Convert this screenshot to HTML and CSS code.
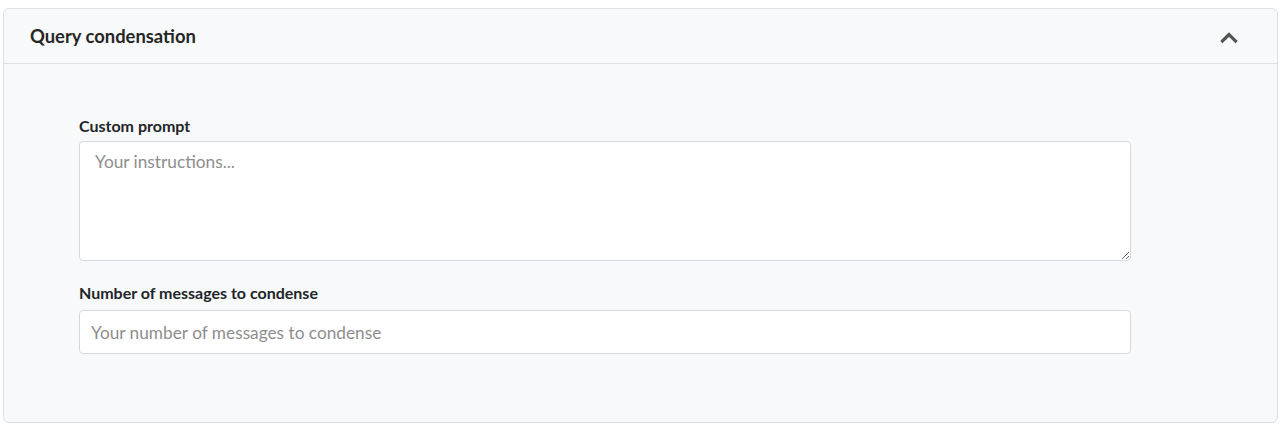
FILE: index.html
```html
<!DOCTYPE html>
<html>
<head>
<meta charset="utf-8">
<link rel="stylesheet" href="styles.css">
</head>
<body>
<div class="card">
  <div class="card-header">
    <span class="title">Query condensation</span>
    <svg class="chev" width="20" height="14" viewBox="0 0 20 14"><path d="M3.5 11 L10 4.5 L16.5 11" fill="none" stroke="#555555" stroke-width="3.2" stroke-linecap="square" stroke-linejoin="miter"/></svg>
  </div>
  <div class="card-body">
    <div class="form">
      <label class="label">Custom prompt</label>
      <textarea class="textarea" placeholder="Your instructions..."></textarea>
      <label class="label second">Number of messages to condense</label>
      <input class="input" type="text" placeholder="Your number of messages to condense">
    </div>
  </div>
</div>
</body>
</html>
```

FILE: styles.css
```css
* { box-sizing: border-box; }
html, body { background: #ffffff; }
body {
  margin: 0;
  padding: 8px 9px 6px 3px;
  font-family: Lato, "Liberation Sans", sans-serif;
  color: #212529;
}
.card {
  border: 1px solid #dcdfe3;
  border-radius: 6px;
  background: #f8f9fa;
  overflow: hidden;
}
.card-header {
  height: 55px;
  display: flex;
  align-items: center;
  justify-content: space-between;
  padding: 0 38px 0 26px;
  border-bottom: 1px solid #dcdfe3;
}
.title {
  font-size: 18.4px;
  font-weight: 700;
  color: #262626;
}
.chev { display: block; margin-top: 2px; }
.card-body {
  padding: 52px 146px 68px 75px;
}
.form { display: flex; flex-direction: column; }
.label {
  font-size: 16px;
  font-weight: 700;
  color: #212529;
  line-height: 20px;
  margin-bottom: 5px;
}
.label.second { margin-top: 22px; margin-bottom: 7px; }
.textarea, .input {
  font-family: Lato, "Liberation Sans", sans-serif;
  font-size: 17.25px;
  color: #212529;
  background: #fff;
  border: 1px solid #d6d9dd;
  border-radius: 4px;
  width: 100%;
  padding: 9px 15px;
  outline: none;
}
.textarea { height: 120px; resize: vertical; display: block; }
.input { height: 44px; padding: 0 11px; }
.textarea::placeholder, .input::placeholder { color: #8e8e8e; }
```
